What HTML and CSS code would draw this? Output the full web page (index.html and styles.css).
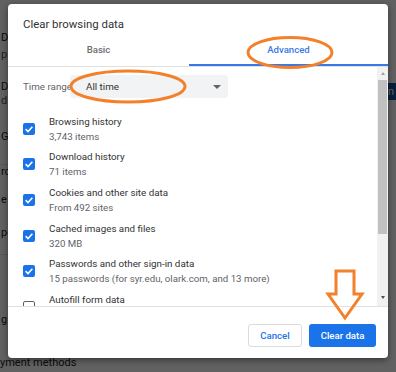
FILE: index.html
```html
<!DOCTYPE html>
<html>
<head>
<meta name="viewport" content="width=device-width, initial-scale=1">
<link rel="stylesheet" href="styles.css">
</head>
<body>

<div class="page">
  <div class="page-lines">
    <div class="pg-line l1">D</div>
    <div class="pg-line l2">p</div>
    <div class="pg-line l3">D</div>
    <div class="pg-line l4">d</div>
    <div class="pg-line l5">G</div>
    <div class="pg-line l6">ro</div>
    <div class="pg-line l7">e</div>
    <div class="pg-line l8">po</div>
    <div class="pg-line l9">g</div>
    <div class="pg-line l10">yment methods</div>
  </div>
  <div class="pg-side">
    <span class="pg-btn">n</span>
  </div>
</div>

<div class="scrim"></div>

<div class="dialog">
  <div class="dlg-title">Clear browsing data</div>
  <div class="tabs">
    <div class="tab tab-basic">Basic</div>
    <div class="tab tab-active">Advanced</div>
  </div>

  <div class="dlg-body">
    <div class="dlg-scroll">
      <div class="range-row">
        <span class="range-label">Time range</span>
        <div class="select">
          <span>All time</span>
          <span class="caret"></span>
        </div>
      </div>

      <div class="item">
        <span class="check on"><svg viewBox="0 0 12 12" width="12" height="12"><path d="M2.6 6.2 L5 8.5 L9.4 3.8" fill="none" stroke="#fff" stroke-width="1.6"/></svg></span>
        <div class="item-text">
          <div class="item-label">Browsing history</div>
          <div class="item-sub">3,743 items</div>
        </div>
      </div>
      <div class="item">
        <span class="check on"><svg viewBox="0 0 12 12" width="12" height="12"><path d="M2.6 6.2 L5 8.5 L9.4 3.8" fill="none" stroke="#fff" stroke-width="1.6"/></svg></span>
        <div class="item-text">
          <div class="item-label">Download history</div>
          <div class="item-sub">71 items</div>
        </div>
      </div>
      <div class="item">
        <span class="check on"><svg viewBox="0 0 12 12" width="12" height="12"><path d="M2.6 6.2 L5 8.5 L9.4 3.8" fill="none" stroke="#fff" stroke-width="1.6"/></svg></span>
        <div class="item-text">
          <div class="item-label">Cookies and other site data</div>
          <div class="item-sub">From 492 sites</div>
        </div>
      </div>
      <div class="item">
        <span class="check on"><svg viewBox="0 0 12 12" width="12" height="12"><path d="M2.6 6.2 L5 8.5 L9.4 3.8" fill="none" stroke="#fff" stroke-width="1.6"/></svg></span>
        <div class="item-text">
          <div class="item-label">Cached images and files</div>
          <div class="item-sub">320 MB</div>
        </div>
      </div>
      <div class="item">
        <span class="check on"><svg viewBox="0 0 12 12" width="12" height="12"><path d="M2.6 6.2 L5 8.5 L9.4 3.8" fill="none" stroke="#fff" stroke-width="1.6"/></svg></span>
        <div class="item-text">
          <div class="item-label">Passwords and other sign-in data</div>
          <div class="item-sub">15 passwords (for syr.edu, olark.com, and 13 more)</div>
        </div>
      </div>
      <div class="item">
        <span class="check"></span>
        <div class="item-text">
          <div class="item-label">Autofill form data</div>
          <div class="item-sub">&nbsp;</div>
        </div>
      </div>
    </div>

    <div class="scrollbar">
      <span class="sb-up"></span>
      <div class="sb-track"><div class="sb-thumb"></div></div>
      <span class="sb-down"></span>
    </div>
  </div>

  <div class="dlg-footer">
    <button class="btn btn-cancel">Cancel</button>
    <button class="btn btn-clear">Clear data</button>
  </div>
</div>

<svg class="marks" width="396" height="372" viewBox="0 0 396 372">
  <ellipse cx="290" cy="52.5" rx="42" ry="15" fill="none" stroke="#f3802b" stroke-width="3"/>
  <ellipse cx="128" cy="86.5" rx="57" ry="15.5" fill="none" stroke="#f3802b" stroke-width="3"/>
  <path d="M336 271 H354 V294 H362 L345 318 L328 294 H336 Z" fill="none" stroke="#f3802b" stroke-width="3" stroke-linejoin="miter"/>
</svg>

</body>
</html>
```

FILE: styles.css
```css
body {
    margin: 0;
    width: 396px;
    height: 372px;
    overflow: hidden;
    position: relative;
    font-family: Roboto, Arial, sans-serif;
    background: #fff;
}

/* page behind the dialog */
.page {
    display: flex;
    height: 372px;
}

.page-lines {
    flex: 1;
    padding-left: 1px;
    font-size: 11px;
    color: #222;
}

.pg-line {
    height: 14px;
    line-height: 14px;
    white-space: nowrap;
}

.l1 { margin-top: 31px; }
.l2 { margin-top: 3px; color: #555; }
.l3 { margin-top: 18px; }
.l4 { margin-top: 0; color: #555; }
.l5 { margin-top: 22px; border-bottom: 1px solid #ddd; padding-bottom: 20px; }
.l6 { margin-top: 0; }
.l7 { margin-top: 14px; }
.l8 { margin-top: 19px; border-bottom: 1px solid #ddd; padding-bottom: 14px; }
.l9 { margin-top: 58px; }
.l10 { margin-top: 29px; margin-left: -1px; }

.pg-side {
    width: 8px;
    padding-top: 83px;
}

.pg-btn {
    display: block;
    height: 17px;
    width: 8px;
    background: #1a4fa0;
    color: #fff;
    font-size: 11px;
    line-height: 17px;
    text-align: left;
}

.scrim {
    position: absolute;
    inset: 0;
    background: rgba(0, 0, 0, 0.62);
}

/* dialog */
.dialog {
    position: absolute;
    left: 8px;
    top: 4px;
    width: 380px;
    height: 354px;
    background: #fff;
    border-radius: 4px;
    box-shadow: 0 2px 6px rgba(0, 0, 0, 0.45);
    display: flex;
    flex-direction: column;
    overflow: hidden;
}

.dlg-title {
    height: 32px;
    padding: 12px 0 0 15px;
    box-sizing: border-box;
    font-size: 11.4px;
    line-height: 16px;
    color: #333;
}

.tabs {
    display: flex;
    height: 31px;
    border-bottom: 1px solid #e0e0e0;
    box-sizing: border-box;
}

.tab {
    font-size: 9.6px;
    font-weight: 500;
    color: #6e6e6e;
    text-align: center;
    line-height: 28px;
}

.tab-basic {
    width: 181px;
}

.tab-active {
    flex: 1;
    color: #3b78e7;
    box-shadow: inset 0 -2px 0 #3b78e7;
}

.dlg-body {
    display: flex;
    height: 239px;
}

.dlg-scroll {
    flex: 1;
    overflow: hidden;
    padding: 8px 0 0 15px;
}

.range-row {
    display: flex;
    align-items: center;
    height: 23px;
}

.range-label {
    width: 47px;
    font-size: 9.8px;
    color: #5f6368;
    white-space: nowrap;
}

.select {
    width: 158px;
    height: 23px;
    background: #f1f3f4;
    border-radius: 3px;
    display: flex;
    align-items: center;
    justify-content: space-between;
    padding: 0 7px 0 16px;
    box-sizing: border-box;
    font-size: 9.8px;
    color: #333;
}

.caret {
    width: 0;
    height: 0;
    border-left: 4px solid transparent;
    border-right: 4px solid transparent;
    border-top: 4px solid #5f6368;
}

.item {
    display: flex;
    align-items: center;
    height: 35.6px;
}

.range-row + .item {
    margin-top: 13px;
}

.check {
    width: 12px;
    height: 12px;
    border-radius: 2px;
    box-sizing: border-box;
    border: 1.5px solid #5f6368;
    margin-right: 14px;
    flex: none;
}

.check.on {
    border: none;
    background: #1a73e8;
}

.check svg {
    display: block;
}

.item-label {
    font-size: 9.8px;
    line-height: 15px;
    color: #333;
    white-space: nowrap;
}

.item-sub {
    font-size: 9.7px;
    line-height: 15px;
    color: #5f6368;
    white-space: nowrap;
}

/* fake scrollbar */
.scrollbar {
    width: 11px;
    background: #f1f1f1;
    display: flex;
    flex-direction: column;
    align-items: center;
}

.sb-up,
.sb-down {
    width: 0;
    height: 0;
    border-left: 2.5px solid transparent;
    border-right: 2.5px solid transparent;
}

.sb-up {
    margin-top: 5px;
    border-bottom: 3px solid #a3a3a3;
}

.sb-down {
    margin: 4px 0 7px;
    border-top: 3px solid #505050;
}

.sb-track {
    flex: 1;
    width: 100%;
    padding-top: 5px;
}

.sb-thumb {
    margin: 0 1px;
    height: 154px;
    background: #c1c1c1;
}

.dlg-footer {
    flex: 1;
    border-top: 1px solid #e0e0e0;
    display: flex;
    justify-content: flex-end;
    align-items: flex-start;
    gap: 7px;
    padding: 17px 12px 0 0;
}

.btn {
    height: 23px;
    border-radius: 3px;
    font-family: Roboto, Arial, sans-serif;
    font-size: 9.6px;
    font-weight: 500;
    padding: 0;
    cursor: pointer;
}

.btn-cancel {
    width: 54px;
    background: #fff;
    border: 1px solid #dadce0;
    color: #1a73e8;
}

.btn-clear {
    width: 67px;
    background: #1a73e8;
    border: none;
    color: #fff;
}

.marks {
    position: absolute;
    left: 0;
    top: 0;
    pointer-events: none;
}
```
